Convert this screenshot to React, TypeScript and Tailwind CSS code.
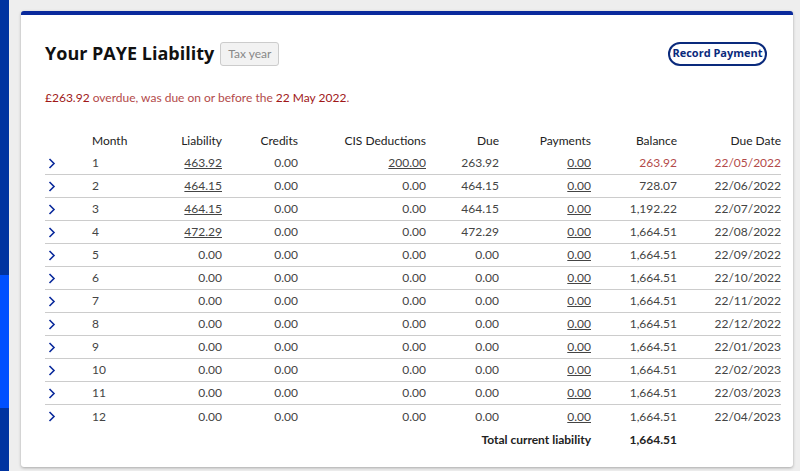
import React from "react";

const rows = [
  ["1","463.92","0.00","200.00","263.92","263.92","22/05/2022"],
  ["2","464.15","0.00","0.00","464.15","728.07","22/06/2022"],
  ["3","464.15","0.00","0.00","464.15","1,192.22","22/07/2022"],
  ["4","472.29","0.00","0.00","472.29","1,664.51","22/08/2022"],
  ["5","0.00","0.00","0.00","0.00","1,664.51","22/09/2022"],
  ["6","0.00","0.00","0.00","0.00","1,664.51","22/10/2022"],
  ["7","0.00","0.00","0.00","0.00","1,664.51","22/11/2022"],
  ["8","0.00","0.00","0.00","0.00","1,664.51","22/12/2022"],
  ["9","0.00","0.00","0.00","0.00","1,664.51","22/01/2023"],
  ["10","0.00","0.00","0.00","0.00","1,664.51","22/02/2023"],
  ["11","0.00","0.00","0.00","0.00","1,664.51","22/03/2023"],
  ["12","0.00","0.00","0.00","0.00","1,664.51","22/04/2023"],
];

const cols = "grid-cols-[47px_60px_70px_76px_128px_73px_92px_86px_104px]";

export default function App() {
  return (
    <div className="flex h-[471px] w-[800px] bg-[#eeeeee] text-[12px] text-[#333]" style={{ fontFamily: "Lato, 'Liberation Sans', sans-serif" }}>
      <div className="flex w-[9px] flex-col">
        <div className="h-[275px] bg-[#0033a0]" />
        <div className="h-[133px] bg-[#0050ff]" />
        <div className="flex-1 bg-[#0033a0]" />
      </div>
      <div className="ml-[12px] mt-[11px] h-[456px] w-[772px] rounded-[3px] border-t-[4px] border-[#0a2a9c] bg-white pl-[24px] pr-[12px] shadow-[0_1px_3px_rgba(0,0,0,0.3)]">
        <div className="mt-[25px] flex items-center">
          <h1 className="text-[18px] font-bold text-[#111]" style={{ fontFamily: "'Open Sans', sans-serif" }}>Your PAYE Liability</h1>
          <span className="ml-[6px] rounded-[3px] border border-[#ccc] bg-[#f2f2f2] px-[7px] py-[2px] text-[12px] text-[#888]">Tax year</span>
          <button className="ml-auto mr-[14px] h-[24px] w-[99px] rounded-full border-[2px] border-[#0a2a7c] text-[11px] font-bold text-[#0a2a7c]" style={{ fontFamily: "'Open Sans', sans-serif" }}>Record Payment</button>
        </div>
        <p className="mt-[22px] text-[12px] text-[#b34a4a]"><span className="text-[#a01818]">£263.92</span> overdue, was due on or before the <span className="text-[#a01818]">22 May 2022</span>.</p>
        <div className="mt-[22px]">
          <div className={`grid ${cols} h-[23px] items-center text-[12px] text-[#222]`}>
            <span />
            <span>Month</span>
            <span className="text-right">Liability</span>
            <span className="text-right">Credits</span>
            <span className="text-right">CIS Deductions</span>
            <span className="text-right">Due</span>
            <span className="text-right">Payments</span>
            <span className="text-right">Balance</span>
            <span className="text-right">Due Date</span>
          </div>
          {rows.map((r, i) => {
            const red = i === 0;
            return (
              <div key={r[0]} className={`grid ${cols} h-[23px] items-center text-[#444] ${i < 11 ? "border-b border-[#ccc]" : ""}`}>
                <span className="pl-[3px] text-[#0a2a9c]">
                  <svg width="8" height="11" viewBox="0 0 8 11"><path d="M1.5 1 L6 5.5 L1.5 10" fill="none" stroke="currentColor" strokeWidth="1.6" /></svg>
                </span>
                <span>{r[0]}</span>
                <span className={`text-right ${i < 4 ? "underline" : ""}`}>{r[1]}</span>
                <span className="text-right">{r[2]}</span>
                <span className={`text-right ${i === 0 ? "underline" : ""}`}>{r[3]}</span>
                <span className="text-right">{r[4]}</span>
                <span className="text-right underline">0.00</span>
                <span className={`text-right ${red ? "text-[#b34a4a]" : ""}`}>{r[5]}</span>
                <span className={`text-right ${red ? "text-[#b34a4a]" : ""}`}>{r[6]}</span>
              </div>
            );
          })}
          <div className={`grid ${cols} h-[23px] items-center font-bold text-[#222]`}>
            <span className="col-span-7 text-right">Total current liability</span>
            <span className="text-right">1,664.51</span>
            <span />
          </div>
        </div>
      </div>
    </div>
  );
}
